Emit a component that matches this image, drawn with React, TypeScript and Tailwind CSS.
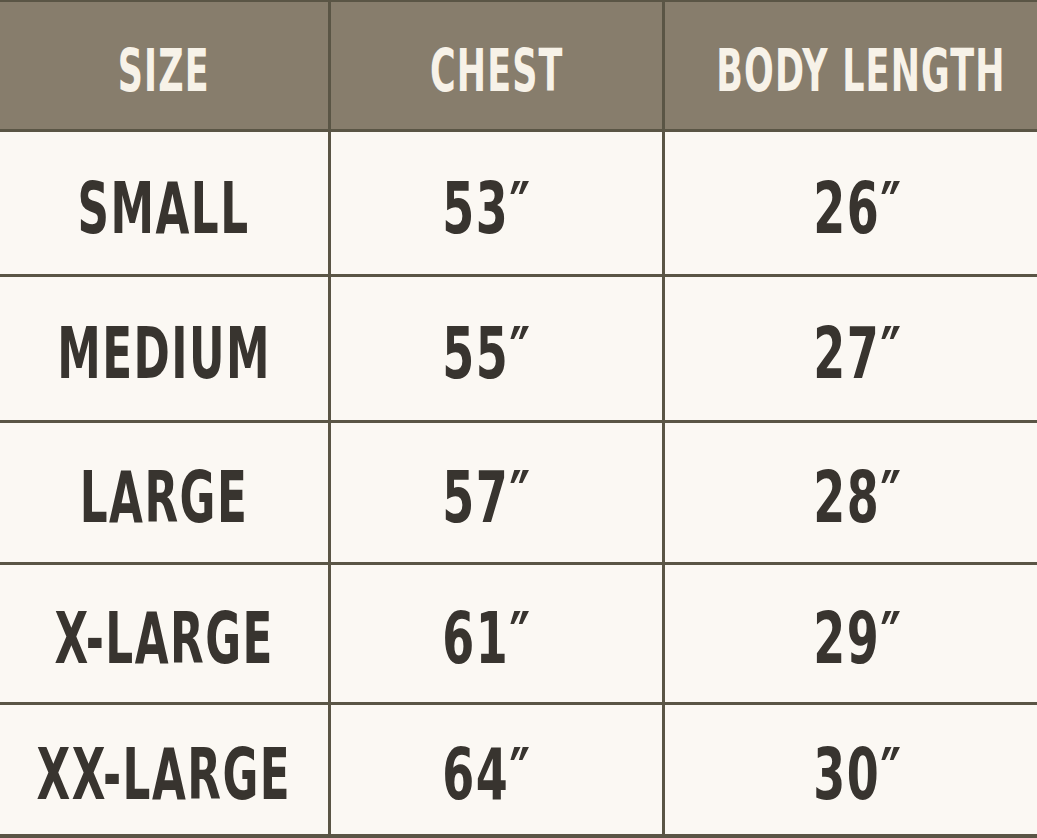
import React from "react";

const font = { fontFamily: '"DejaVu Sans Condensed", "DejaVu Sans", sans-serif' };

const rows: [string, string, string][] = [
  ["SMALL", "53″", "26″"],
  ["MEDIUM", "55″", "27″"],
  ["LARGE", "57″", "28″"],
  ["X-LARGE", "61″", "29″"],
  ["XX-LARGE", "64″", "30″"],
];

function Head({ children, extra }: { children: React.ReactNode; extra?: string }) {
  return (
    <div className={"min-w-0 bg-[#877d6c] flex items-center justify-center pt-[10px] " + (extra ?? "")}>
      <span className="inline-block scale-x-[0.67] text-[58px] leading-none font-bold tracking-[0.03em] text-[#f7f2e8] whitespace-nowrap">
        {children}
      </span>
    </div>
  );
}

function Cell({ children, extra, num }: { children: React.ReactNode; extra?: string; num?: boolean }) {
  return (
    <div className={"min-w-0 bg-[#fbf8f3] flex items-center justify-center pt-[10px] " + (extra ?? "")}>
      <span
        className={
          "inline-block text-[71px] leading-none font-bold tracking-[0.03em] text-[#38342f] whitespace-nowrap " +
          (num ? "scale-x-[0.72]" : "scale-x-[0.685]")
        }
      >
        {children}
      </span>
    </div>
  );
}

export default function App() {
  return (
    <div
      style={font}
      className="w-[1037px] h-[838px] bg-[#5a5545] pt-[2px] pb-[4px] grid grid-cols-[328px_331px_372px] grid-rows-[127px_142px_143px_139px_137px_129px] gap-[3px] overflow-hidden"
    >
      <Head>SIZE</Head>
      <Head>CHEST</Head>
      <Head extra="pl-[20px]">BODY LENGTH</Head>
      {rows.map((r) => (
        <React.Fragment key={r[0]}>
          <Cell>{r[0]}</Cell>
          <Cell num extra="pr-[20px]">{r[1]}</Cell>
          <Cell num extra="pl-[14px]">{r[2]}</Cell>
        </React.Fragment>
      ))}
    </div>
  );
}
